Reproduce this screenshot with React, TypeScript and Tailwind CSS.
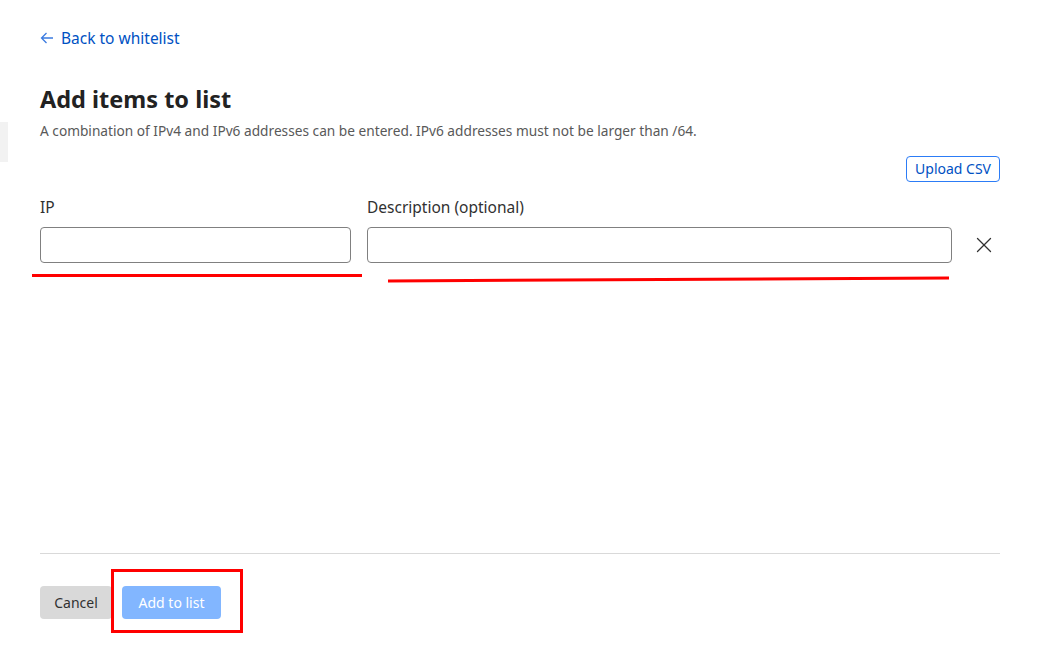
import { X } from "lucide-react";

export default function App() {
  return (
    <div className="relative h-[649px] w-[1050px] overflow-hidden bg-white font-['Noto_Sans','Open_Sans',sans-serif] text-[#313131]">
      {/* sidebar edge */}
      <div className="absolute left-0 top-[122px] h-[40px] w-[8px] bg-[#f2f2f2]" />

      <div className="flex h-full w-[1000px] flex-col pl-[40px] pt-[27px]">
        <a href="#" className="flex items-center gap-[7px] text-[15.5px] leading-[22px] text-[#0051c3]">
          <svg width="14" height="12" viewBox="0 0 14 12" fill="none" stroke="#3b7be0" strokeWidth="1.3">
            <path d="M13 6H1.5M6.5 1L1.5 6l5 5" />
          </svg>
          Back to whitelist
        </a>

        <h1 className="mt-[35px] text-[23.5px] font-bold leading-[30px] text-[#222]">Add items to list</h1>
        <p className="mt-[8px] text-[13.7px] leading-[18px] text-[#595959]">
          A combination of IPv4 and IPv6 addresses can be entered. IPv6 addresses must not be larger than /64.
        </p>

        <div className="mt-[16px] flex justify-end">
          <button className="h-[26px] rounded-[4px] border border-[#2c7cf6] px-[8px] text-[14px] leading-none text-[#0051c3]">
            Upload CSV
          </button>
        </div>

        <div className="mt-[15px] flex items-end gap-[16px]">
          <div className="flex w-[311px] shrink-0 flex-col">
            <label className="text-[15.5px] leading-[20px]">IP</label>
            <input className="mt-[10px] h-[36px] rounded-[4px] border border-[#808080] px-2 outline-none" />
          </div>
          <div className="flex w-[585px] shrink-0 flex-col">
            <label className="text-[15.5px] leading-[20px]">Description (optional)</label>
            <input className="mt-[10px] h-[36px] rounded-[4px] border border-[#808080] px-2 outline-none" />
          </div>
          <div className="flex h-[36px] items-center pl-[3px]">
            <X size={26} strokeWidth={1.2} className="text-[#313131]" />
          </div>
        </div>

        <div className="flex-1" />

        <div className="border-t border-[#d9d9d9] pb-[30px] pt-[32px]">
          <div className="flex gap-[10px]">
            <button className="h-[33px] w-[72px] rounded-[4px] bg-[#d9d9d9] text-[14px] text-[#313131]">Cancel</button>
            <button className="h-[33px] w-[99px] rounded-[4px] bg-[#82b6ff] text-[14px] text-white">Add to list</button>
          </div>
        </div>
      </div>

      {/* red annotations */}
      <svg className="pointer-events-none absolute left-0 top-0" width="1050" height="649">
        <line x1="32" y1="275.5" x2="362" y2="275.5" stroke="#ff0000" strokeWidth="3" />
        <line x1="388" y1="281" x2="949" y2="278" stroke="#ff0000" strokeWidth="3" />
        <rect x="112.5" y="570.5" width="129" height="61" fill="none" stroke="#ff0000" strokeWidth="3" />
      </svg>
    </div>
  );
}
